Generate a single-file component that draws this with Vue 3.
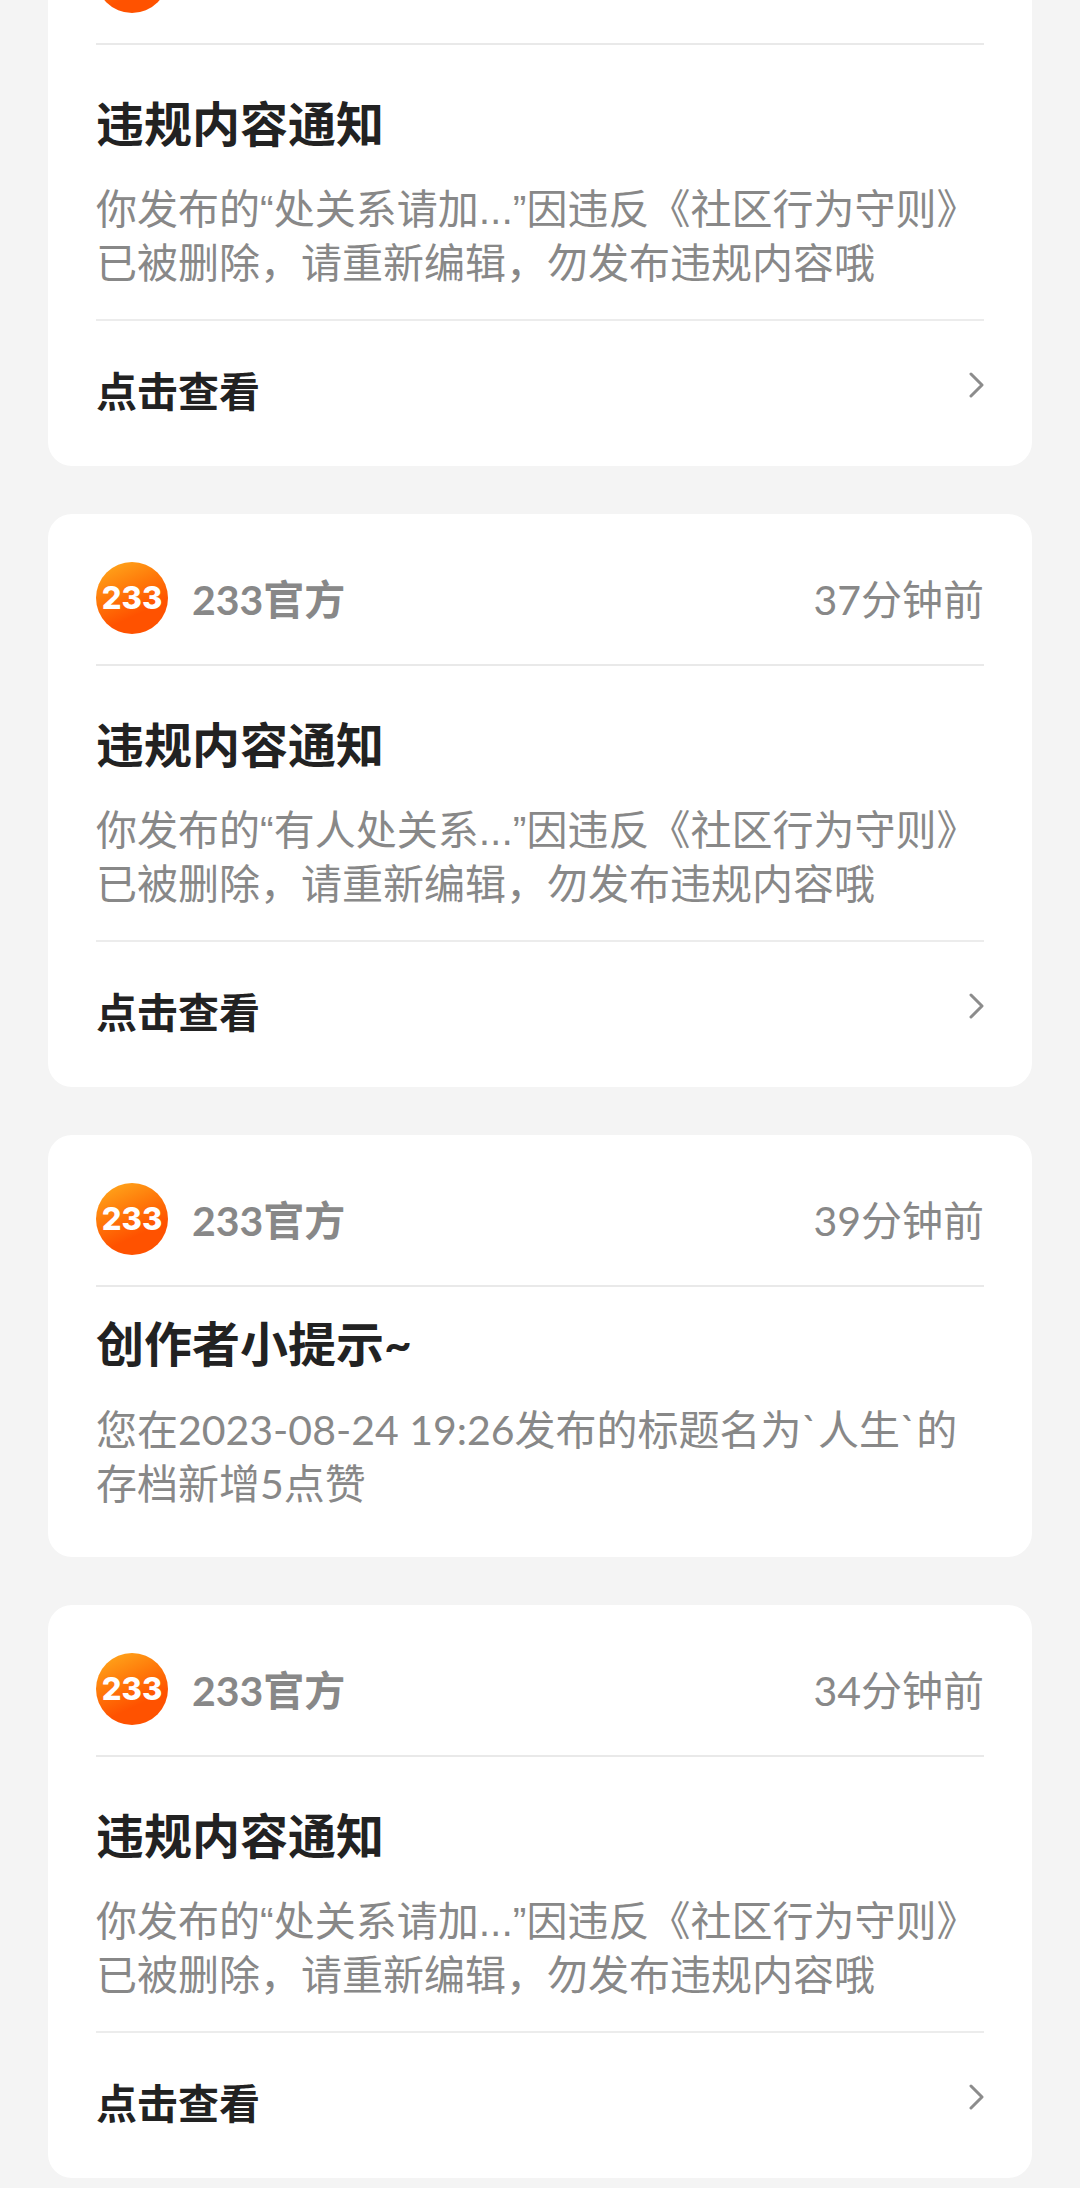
<script setup>
const violation = (id, quote, time) => ({
  id,
  time,
  title: '违规内容通知',
  body: `你发布的“${quote}...”因违反《社区行为守则》已被删除，请重新编辑，勿发布违规内容哦`,
  action: '点击查看',
})

// The first notice is scrolled past its sender line, so it carries no time.
const notices = [
  violation(1, '处关系请加', ''),
  violation(2, '有人处关系', '37分钟前'),
  {
    id: 3,
    time: '39分钟前',
    title: '创作者小提示~',
    body: '您在2023-08-24 19:26发布的标题名为`人生`的存档新增5点赞',
  },
  violation(4, '处关系请加', '34分钟前'),
]
</script>

<template>
  <main class="feed">
    <div class="list">
      <article
        v-for="notice in notices"
        :key="notice.id"
        class="card"
        :class="{ 'card--plain': !notice.action }"
      >
        <header class="head">
          <span class="avatar"><template v-if="notice.time">233</template></span>
          <template v-if="notice.time">
            <span class="name">233官方</span>
            <time class="time">{{ notice.time }}</time>
          </template>
        </header>
        <section class="content">
          <h2 class="title">{{ notice.title }}</h2>
          <p class="body">{{ notice.body }}</p>
        </section>
        <button v-if="notice.action" type="button" class="action">
          <span>{{ notice.action }}</span>
          <svg class="chevron" viewBox="0 0 16 40" aria-hidden="true">
            <path d="M3 9 L14 20 L3 31" />
          </svg>
        </button>
      </article>
    </div>
  </main>
</template>

<style>
body {
  margin: 0;
  background: #f4f4f4;
}
</style>

<style scoped>
.feed {
  height: 100vh;
  overflow: hidden;
  background: #f4f4f4;
  color: #888;
  font-family: Lato, "Noto Sans CJK SC", sans-serif;
  font-size: 41px;
  line-height: 54px;
}

/* The list is scrolled so that the first card's header is mostly out of view. */
.list {
  display: flex;
  flex-direction: column;
  gap: 48px;
  margin-top: -107px;
  padding: 0 48px 48px;
}

.card {
  padding: 48px 48px 0;
  border-radius: 24px;
  background: #fff;
}

.head {
  display: flex;
  align-items: center;
  padding-bottom: 30px;
  border-bottom: 2px solid #e9e9e9;
}

.avatar {
  display: flex;
  align-items: center;
  justify-content: center;
  width: 72px;
  height: 72px;
  margin-right: 24px;
  border-radius: 50%;
  background: linear-gradient(155deg, #ffa81c 5%, #ff7a0a 38%, #ff5200 68%);
  color: #fff;
  font-family: Inter, sans-serif;
  font-size: 31px;
  font-weight: 800;
}

.name,
.time {
  padding-top: 4px;
}

.name {
  font-weight: 700;
}

.time {
  margin-left: auto;
}

.content {
  padding: 47px 0 28px;
}

.card--plain .content {
  padding: 25px 0 46px;
}

.title {
  margin: 0 0 27px;
  color: #222;
  font-size: 48px;
  font-weight: 700;
  line-height: 64px;
}

.body {
  margin: 0;
  font-family: "Liberation Sans", "Noto Sans CJK SC", sans-serif;
}

.card--plain .body {
  font-family: Lato, "Noto Sans CJK SC", sans-serif;
}

.action {
  display: flex;
  align-items: flex-start;
  justify-content: space-between;
  width: 100%;
  padding: 44px 0 47px;
  border: 0;
  border-top: 2px solid #ececec;
  background: none;
  color: #222;
  font: inherit;
  font-weight: 700;
  text-align: left;
  cursor: pointer;
}

.chevron {
  width: 16px;
  height: 40px;
  fill: none;
  stroke: #8c8c8c;
  stroke-width: 3;
  stroke-linecap: round;
  stroke-linejoin: round;
}
</style>
